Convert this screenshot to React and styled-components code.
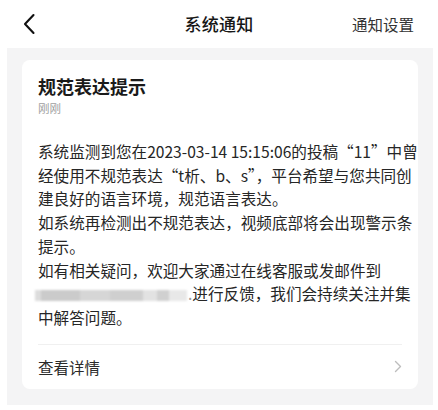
import React from 'react';
import styled, { createGlobalStyle } from 'styled-components';

const GlobalStyle = createGlobalStyle`
  html, body {
    margin: 0;
    padding: 0;
    background: #fff;
  }
  body {
    font-family: "Noto Sans CJK SC", "Noto Sans", sans-serif;
    color: #222;
  }
`;

const Page = styled.div`
  width: 438px;
  height: 410px;
  background: #fff;
  overflow: hidden;
`;

const Header = styled.header`
  height: 48px;
  display: grid;
  grid-template-columns: 1fr auto 1fr;
  align-items: center;
  padding: 0 22px 0 22px;
  box-sizing: border-box;
`;

const BackButton = styled.button`
  justify-self: start;
  border: 0;
  background: none;
  padding: 0;
  margin: 0;
  display: flex;
  align-items: center;
  height: 24px;
  cursor: pointer;
`;

const Title = styled.h1`
  margin: 0;
  font-size: 17px;
  font-weight: 500;
  color: #161616;
  line-height: 24px;
  letter-spacing: 0.2px;
`;

const Settings = styled.a`
  justify-self: end;
  font-size: 15.5px;
  color: #333;
  text-decoration: none;
  line-height: 24px;
  margin-right: 2px;
`;

const Panel = styled.main`
  margin: 0 5px 0 7px;
  height: 357px;
  background: #f4f4f5;
  padding: 12px 15px 0 15px;
  box-sizing: border-box;
`;

const Card = styled.section`
  background: #fff;
  border-radius: 8px;
  padding: 0 16px;
  height: 329px;
  box-sizing: border-box;
  display: flex;
  flex-direction: column;
`;

const CardTitle = styled.h2`
  margin: 14px 0 0;
  font-size: 18px;
  font-weight: 600;
  line-height: 24px;
  color: #1a1a1a;
`;

const Time = styled.div`
  margin-top: 2px;
  font-size: 11.5px;
  line-height: 16px;
  color: #a0a0a0;
`;

const Body = styled.div`
  margin-top: 24px;
  font-size: 15.6px;
  line-height: 23.7px;
  color: #262626;
`;

const Line = styled.span`
  display: block;
  white-space: nowrap;
`;

const Redacted = styled.span`
  display: inline-block;
  width: 152px;
  height: 11px;
  margin-left: -3px;
  vertical-align: -1px;
  background: linear-gradient(
    90deg,
    #dcdcdc 0 6px,
    #cbcbcb 6px 45px,
    #d6d6d6 45px 75px,
    #cfcfcf 75px 108px,
    #e2e2e2 108px 122px,
    #d0d0d0 122px 134px,
    #e8e8e8 134px 152px
  );
  filter: blur(1.2px);
`;

const Dot = styled.span`
  color: #9a9a9a;
  margin-left: 1px;
`;

const Divider = styled.hr`
  margin: 14px 0 0;
  border: 0;
  border-top: 1px solid #f0f0f0;
`;

const DetailRow = styled.a`
  height: 44px;
  display: flex;
  align-items: center;
  justify-content: space-between;
  font-size: 15.5px;
  color: #2a2a2a;
  text-decoration: none;
`;

const Chevron = () => (
  <svg width="8" height="13" viewBox="0 0 8 13" fill="none">
    <path d="M1.5 1.5L6.5 6.5L1.5 11.5" stroke="#bdbdbd" strokeWidth="1.4" strokeLinecap="round" strokeLinejoin="round" />
  </svg>
);

const BackIcon = () => (
  <svg width="14" height="22" viewBox="0 0 14 22" fill="none">
    <path d="M11.5 2L3 11L11.5 20" stroke="#111" strokeWidth="2.1" strokeLinecap="round" strokeLinejoin="round" />
  </svg>
);

export default function App() {
  return (
    <Page>
      <GlobalStyle />
      <Header>
        <BackButton aria-label="返回">
          <BackIcon />
        </BackButton>
        <Title>系统通知</Title>
        <Settings href="#">通知设置</Settings>
      </Header>
      <Panel>
        <Card>
          <CardTitle>规范表达提示</CardTitle>
          <Time>刚刚</Time>
          <Body>
            <Line>系统监测到您在2023-03-14 15:15:06的投稿“11”中曾</Line>
            <Line>经使用不规范表达“t析、b、s”，平台希望与您共同创</Line>
            <Line>建良好的语言环境，规范语言表达。</Line>
            <Line>如系统再检测出不规范表达，视频底部将会出现警示条</Line>
            <Line>提示。</Line>
            <Line>如有相关疑问，欢迎大家通过在线客服或发邮件到</Line>
            <Line><Redacted /><Dot>.</Dot>进行反馈，我们会持续关注并集</Line>
            <Line>中解答问题。</Line>
          </Body>
          <Divider />
          <DetailRow href="#">
            <span>查看详情</span>
            <Chevron />
          </DetailRow>
        </Card>
      </Panel>
    </Page>
  );
}
